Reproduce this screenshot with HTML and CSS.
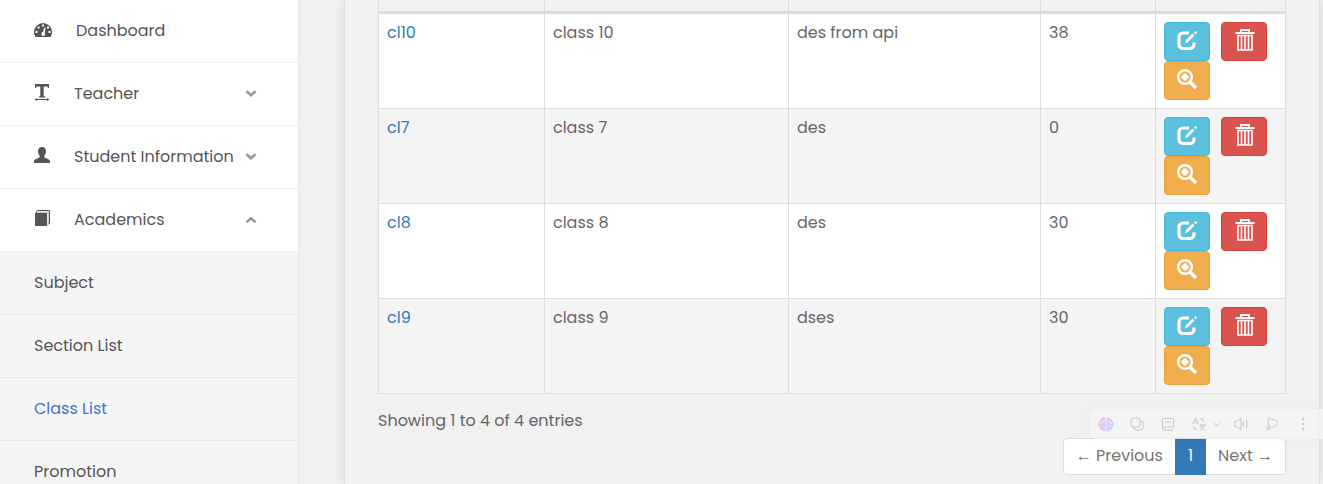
FILE: index.html
```html
<!DOCTYPE html>
<html lang="en">
<head>
    <meta charset="UTF-8">
    <meta name="viewport" content="width=device-width, initial-scale=1.0">
    <title>Class List</title>
    <link rel="stylesheet" href="styles.css">
</head>
<body>
    <!-- shared icons -->
    <svg class="sprite" aria-hidden="true">
        <symbol id="down" viewBox="0 0 12 8"><path d="M1.500 2.200 6 6.200l4.500-4" fill="none" stroke="currentColor" stroke-width="2.600"/></symbol>
        <symbol id="up" viewBox="0 0 12 8"><path d="M1.500 7.200 6 3.200l4.500 4" fill="none" stroke="currentColor" stroke-width="2.600"/></symbol>
        <symbol id="edit" viewBox="0 0 22 22">
            <path d="M13 4H7a4 4 0 0 0-4 4v7.500a4 4 0 0 0 4 4h7a4 4 0 0 0 4-4V13.500" fill="none" stroke="currentColor" stroke-width="3.200"/>
            <path d="M9 14.500l1-3.500L16.500 4.500l2 2-6.500 6.500zM18 3.500 19.500 2l1.700 1.700L19.700 5.200z" fill="currentColor"/>
        </symbol>
        <symbol id="trash" viewBox="0 0 22 22">
            <path d="M2.500 4h19M8 4V1h8v3" fill="none" stroke="currentColor" stroke-width="1.800"/>
            <path d="M5 6.500h14v14.500H5zM8.500 7v14M12 7v14M15.500 7v14" fill="none" stroke="currentColor" stroke-width="1.600"/>
        </symbol>
        <symbol id="zoom" viewBox="0 0 22 22">
            <circle cx="9" cy="9" r="6.800" fill="none" stroke="currentColor" stroke-width="2.600"/>
            <path d="M13.500 13.500l6.500 6.500" stroke="currentColor" stroke-width="3.600"/>
            <path d="M9 5.500v7M5.500 9h7" stroke="currentColor" stroke-width="3.400"/>
        </symbol>
    </svg>

    <div class="wrapper">
        <nav class="sidebar">
            <ul class="menu">
                <li><a href="#" class="menu-link">
                    <svg class="menu-icon wide" viewBox="0 0 18 18"><path d="M1.500 16C.5 14.500 0 13 0 11a9 9 0 0 1 18 0c0 2-.5 3.500-1.500 5z" fill="currentColor"/><g fill="#fff"><path d="M1.500 10h2v2h-2zM3.500 5.500h2v2h-2zM8 3.500h2v2H8zM13 5.500h2v2h-2zM14.500 10h2v2h-2z"/><path d="M10.500 6.500l1.200.4-1.200 5.200-1.700-.5z"/><circle cx="9.200" cy="13" r="1.900"/></g></svg>
                    <span>Dashboard</span>
                </a></li>
                <li><a href="#" class="menu-link">
                    <svg class="menu-icon" viewBox="0 0 16 18"><path d="M1 0h14v4h-1c-.2-1.200-.7-1.600-2-1.600H9.700v9.200c0 .8.500 1 1.800 1.100v.8h-7v-.8c1.300-.1 1.800-.3 1.800-1.100V2.400H4C2.700 2.400 2.200 2.800 2 4H1zM.5 15.500 3 14v1h10v-1l2.500 1.500L13 17v-1H3v1z" fill="currentColor"/></svg>
                    <span>Teacher</span>
                    <svg class="arrow"><use href="#down"/></svg>
                </a></li>
                <li><a href="#" class="menu-link">
                    <svg class="menu-icon" viewBox="0 0 16 18"><path d="M8 0c2.600 0 4 1.700 4 4.200 0 1.900-.7 3.500-1.700 4.600v1.500c.4.800 5.700 1.700 5.700 4.200V16H0v-1.500c0-2.500 5.300-3.400 5.700-4.200V8.800C4.700 7.700 4 6.100 4 4.200 4 1.700 5.400 0 8 0z" fill="currentColor"/></svg>
                    <span>Student Information</span>
                    <svg class="arrow"><use href="#down"/></svg>
                </a></li>
                <li><a href="#" class="menu-link">
                    <svg class="menu-icon" viewBox="0 0 16 18"><path d="M3.500 1.500H15V14l-1.500 1V3H2.500z" fill="#ccc"/><path d="M1 3v13h12V3z" fill="currentColor"/><path d="M1.500 3.500l2-3h12v12.500l-1.500 1.500" fill="none" stroke="currentColor"/></svg>
                    <span>Academics</span>
                    <svg class="arrow"><use href="#up"/></svg>
                </a>
                    <ul class="submenu">
                        <li><a href="#" class="menu-link">Subject</a></li>
                        <li><a href="#" class="menu-link">Section List</a></li>
                        <li><a href="#" class="menu-link active">Class List</a></li>
                        <li><a href="#" class="menu-link">Promotion</a></li>
                    </ul>
                </li>
            </ul>
        </nav>

        <main class="content">
            <section class="panel">
                <table class="table">
                    <colgroup><col class="col-id"><col class="col-name"><col class="col-des"><col class="col-count"><col class="col-action"></colgroup>
                    <thead>
                        <tr><td></td><td></td><td></td><td></td><td></td></tr>
                    </thead>
                    <tbody>
                        <tr>
                            <td><a href="#">cl10</a></td><td>class 10</td><td>des from api</td><td>38</td>
                            <td><div class="actions">
                                <button class="btn btn-info" aria-label="Edit"><svg><use href="#edit"/></svg></button>
                                <button class="btn btn-danger" aria-label="Delete"><svg><use href="#trash"/></svg></button>
                                <button class="btn btn-warning" aria-label="View"><svg><use href="#zoom"/></svg></button>
                            </div></td>
                        </tr>
                        <tr>
                            <td><a href="#">cl7</a></td><td>class 7</td><td>des</td><td>0</td>
                            <td><div class="actions">
                                <button class="btn btn-info" aria-label="Edit"><svg><use href="#edit"/></svg></button>
                                <button class="btn btn-danger" aria-label="Delete"><svg><use href="#trash"/></svg></button>
                                <button class="btn btn-warning" aria-label="View"><svg><use href="#zoom"/></svg></button>
                            </div></td>
                        </tr>
                        <tr>
                            <td><a href="#">cl8</a></td><td>class 8</td><td>des</td><td>30</td>
                            <td><div class="actions">
                                <button class="btn btn-info" aria-label="Edit"><svg><use href="#edit"/></svg></button>
                                <button class="btn btn-danger" aria-label="Delete"><svg><use href="#trash"/></svg></button>
                                <button class="btn btn-warning" aria-label="View"><svg><use href="#zoom"/></svg></button>
                            </div></td>
                        </tr>
                        <tr>
                            <td><a href="#">cl9</a></td><td>class 9</td><td>dses</td><td>30</td>
                            <td><div class="actions">
                                <button class="btn btn-info" aria-label="Edit"><svg><use href="#edit"/></svg></button>
                                <button class="btn btn-danger" aria-label="Delete"><svg><use href="#trash"/></svg></button>
                                <button class="btn btn-warning" aria-label="View"><svg><use href="#zoom"/></svg></button>
                            </div></td>
                        </tr>
                    </tbody>
                </table>
                <p class="info">Showing 1 to 4 of 4 entries</p>
                <div class="pagination">
                    <a href="#"><span class="sign">←</span> Previous</a>
                    <a href="#" class="current">1</a>
                    <a href="#">Next <span class="sign">→</span></a>
                </div>
            </section>
        </main>
    </div>

    <!-- floating reader toolbar -->
    <div class="toolbar">
        <svg viewBox="0 0 16 16"><defs><linearGradient id="brain" x1="0" y1="0" x2="1" y2="1"><stop offset="0" stop-color="#f6c3dc"/><stop offset=".5" stop-color="#dccbf3"/><stop offset="1" stop-color="#b9d6fa"/></linearGradient></defs><path d="M7.500 1.500C6 .3 4 1 3.500 2.700 1.800 3 1.200 4.600 1.500 6-.5 7-.5 9.500 1.200 10.400 1 12.500 2.300 13.500 3.700 13.500 4.500 15.500 7 15.500 7.500 14.500zM8.500 1.500C10 .3 12 1 12.500 2.700c1.700.3 2.300 1.900 2 3.300 2 1 2 3.500.3 4.400.2 2.100-1.100 3.100-2.500 3.100-.8 2-3.300 2-3.800 1z" fill="url(#brain)" stroke="none"/><path d="M2 7h2l1-2M3.500 11l2-2M14 7h-2l-1-2M12.500 11l-2-2" stroke="#f3f3f3"/></svg>
        <svg viewBox="0 0 16 16"><rect x="2" y="2" width="9" height="9" rx="2"/><path d="M11 5h1a2 2 0 0 1 2 2v5a2 2 0 0 1-2 2H7a2 2 0 0 1-2-2v-1"/></svg>
        <svg viewBox="0 0 16 16"><path d="M13.500 11V3.500a1 1 0 0 0-1-1h-9a1 1 0 0 0-1 1V12a2 2 0 0 0 2 2h9M2.500 11h11M5 6h6"/></svg>
        <svg class="translate" viewBox="0 0 16 16"><path d="M2 8l2.500-6L7 8M3 6h3M9 3h3v3M3 10v3h3M8.500 9h6M9.500 9c1 3 2.500 4 4.500 5M13.500 9c-1 3-2.500 4-4.500 5"/></svg>
        <svg class="caret" viewBox="0 0 8 16"><path d="M1 7l3 3 3-3"/></svg>
        <svg viewBox="0 0 16 16"><path d="M1.500 5.500h2L8 2v12l-4.500-3.500h-2zM10.500 5.500v5M13 3.500c1.500 2.500 1.500 6.500 0 9"/></svg>
        <svg viewBox="0 0 16 16"><path d="M4 3.500Q4.500 2 6 2.500l6.500 2q2 1 .8 2.800L11 10.500l-5.500 1.200zM5.500 11.700l-2.500 2 .5-4"/><path d="M2.500 13.500l3-1.500 1 1.500z" stroke="#ecdcae"/></svg>
        <svg viewBox="0 0 16 16"><path d="M8 2v2M8 7v2M8 12v2" stroke-width="2"/></svg>
    </div>
</body>
</html>
```

FILE: styles.css
```css
* {
    box-sizing: border-box;
}
body {
    margin: 0;
    height: 100vh;
    overflow: hidden;
    background: #f1f1f1;
    color: #666;
    font-family: Poppins, Inter, sans-serif;
    font-size: 16px;
    line-height: 22px;
}
a {
    color: #337ab7;
    text-decoration: none;
}
.sprite {
    display: none;
}
.wrapper {
    display: flex;
    min-height: 100vh;
}

/* sidebar */
.sidebar {
    flex: 0 0 299px;
    background: #fff;
    border-right: 1px solid #e5e5e5;
}
.menu,
.submenu {
    margin: 0;
    padding: 0;
    list-style: none;
}
.menu-link {
    display: flex;
    align-items: center;
    height: 63px;
    padding: 0 41px 2px 34px;
    border-bottom: 1px solid #eee;
    color: #555;
    line-height: 23px;
}
.menu-icon {
    width: 16px;
    height: 18px;
    margin-right: 24px;
}
.menu-icon.wide {
    width: 18px;
}
.arrow {
    width: 12px;
    height: 8px;
    margin-left: auto;
    color: #999;
}
.submenu {
    background: #f5f5f5;
}
.submenu .menu-link {
    border-color: #e8e8e8;
}
.submenu .active {
    color: #4272d7;
}

/* content */
.content {
    flex: 1;
    padding: 0 3px 0 45px;
}
.panel {
    min-height: 100vh;
    padding: 0 33px;
    border: 1px solid #ddd;
    border-width: 0 1px;
    box-shadow: 0 0 10px rgba(0, 0, 0, 0.1);
}
.table {
    width: 100%;
    table-layout: fixed;
    border-collapse: collapse;
    background: #fff;
}
.col-id { width: 18.3%; }
.col-name { width: 26.9%; }
.col-des { width: 27.8%; }
.col-count { width: 12.7%; }
.table td {
    padding: 8px;
    border: 1px solid #ddd;
    vertical-align: top;
}
.table thead td {
    height: 12px;
    padding: 0;
    border-top: 0;
    border-bottom: 3px solid #ddd;
    background: #f1f1f1;
}
.table tbody tr:nth-child(even) {
    background: #f4f4f4;
}
.actions {
    display: grid;
    grid-template-columns: 46px 46px;
    column-gap: 11px;
}
.btn {
    display: flex;
    align-items: center;
    justify-content: center;
    height: 39px;
    padding: 0 0 2px;
    border: 1px solid;
    border-radius: 4px;
    cursor: pointer;
}
.btn svg {
    width: 22px;
    height: 22px;
    color: #fff;
}
.btn-info {
    background: #5bc0de;
    border-color: #46b8da;
}
.btn-danger {
    background: #d9534f;
    border-color: #d43f3a;
}
.btn-warning {
    background: #f0ad4e;
    border-color: #eea236;
}
.info {
    margin: 16px 0 6px;
}
.pagination {
    display: flex;
    width: max-content;
    margin-left: auto;
    border: 1px solid #ddd;
    border-radius: 4px;
    background: #fff;
}
.pagination a {
    padding: 6px 12px 7px;
    color: #777;
}
.pagination .current {
    margin: -1px 0;
    padding: 7px 13px 8px;
    background: #337ab7;
    color: #fff;
}
.sign {
    font-family: "Liberation Sans", Arial, sans-serif;
    line-height: 1;
}

/* toolbar */
.toolbar {
    position: absolute;
    right: 0;
    bottom: 45px;
    display: flex;
    align-items: center;
    gap: 15px;
    height: 30px;
    padding: 0 12px 0 8px;
    border-radius: 8px 0 0 8px;
    background: rgba(245, 245, 245, 0.8);
    box-shadow: 0 0 16px rgba(0, 0, 0, 0.03);
}
.toolbar svg {
    width: 16px;
    height: 16px;
    fill: none;
    stroke: #c8c8c8;
}
.toolbar .translate {
    margin-right: -9px;
}
.toolbar .caret {
    width: 8px;
    margin-right: -3px;
}
```
